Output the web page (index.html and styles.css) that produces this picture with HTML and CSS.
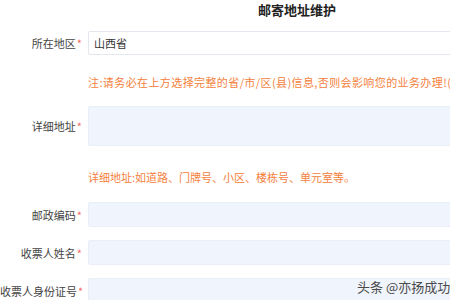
FILE: index.html
```
<!DOCTYPE html>
<html lang="zh-CN">

<head>
  <meta charset="UTF-8" />
  <meta name="viewport" content="width=device-width, initial-scale=1.0" />
  <title>邮寄地址维护</title>
  <link rel="stylesheet" href="styles.css">
</head>

<body>
  <div class="page">
    <h2 class="title">邮寄地址维护</h2>
    <form class="form">
      <div class="row">
        <label for="area">所在地区<span class="req">*</span></label>
        <input type="text" id="area" class="plain" value="山西省" />
      </div>
      <p class="note note-first">注:请务必在上方选择完整的省/市/区(县)信息,否则会影响您的业务办理!(暂不支持港澳台地区)</p>
      <div class="row row-area">
        <label for="addr">详细地址<span class="req">*</span></label>
        <textarea id="addr"></textarea>
      </div>
      <p class="note note-second">详细地址:如道路、门牌号、小区、楼栋号、单元室等。</p>
      <div class="row row-zip">
        <label for="zip">邮政编码<span class="req">*</span></label>
        <input type="text" id="zip" />
      </div>
      <div class="row">
        <label for="name">收票人姓名<span class="req">*</span></label>
        <input type="text" id="name" />
      </div>
      <div class="row">
        <label for="idno">收票人身份证号<span class="req">*</span></label>
        <input type="text" id="idno" />
      </div>
    </form>
    <div class="mark">头条 @亦扬成功</div>
  </div>
</body>

</html>
```

FILE: styles.css
```
body {
  margin: 0;
  background-color: #fff;
  font-family: "Noto Sans CJK SC", "Noto Sans", sans-serif;
  overflow: hidden;
}

.page {
  position: relative;
  width: 450px;
  height: 300px;
  overflow: hidden;
}

.title {
  margin: 0 0 11px 0;
  padding-left: 258px;
  height: 20px;
  line-height: 20px;
  font-size: 13px;
  font-weight: bold;
  color: #222;
  white-space: nowrap;
}

.form {
  display: flex;
  flex-direction: column;
  width: 520px;
}

.row {
  display: grid;
  grid-template-columns: 82px 420px;
  column-gap: 6px;
  align-items: center;
  margin-bottom: 13px;
}

label {
  text-align: right;
  font-size: 11px;
  color: #444;
  white-space: nowrap;
}

.req {
  color: #f56c6c;
  margin-left: 1px;
}

input,
textarea {
  box-sizing: border-box;
  width: 420px;
  height: 25px;
  border: 1px solid #e9eef7;
  border-radius: 2px;
  background-color: #f0f4fc;
  outline: none;
  padding: 0 5px;
  font-family: inherit;
  font-size: 11px;
  color: #333;
}

input.plain {
  height: 24px;
  background-color: #fff;
  border-color: #e4e7ed;
}

textarea {
  height: 40px;
  resize: none;
}

.note {
  margin: 0;
  padding-left: 88px;
  height: 16px;
  line-height: 16px;
  font-size: 11px;
  color: #f5813d;
  white-space: nowrap;
}

.note-first {
  margin-top: 6px;
  margin-bottom: 16px;
  letter-spacing: 0.4px;
}

.note-second {
  margin-top: 5px;
  margin-bottom: 17px;
}

.row-area {
  margin-bottom: 18px;
}

.mark {
  position: absolute;
  left: 357px;
  top: 277px;
  font-size: 13px;
  color: #4a4a4a;
  white-space: nowrap;
}
```
